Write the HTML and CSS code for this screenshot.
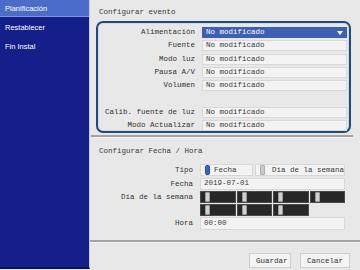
FILE: index.html
```html
<!DOCTYPE html>
<html lang="es">
<head>
  <meta charset="UTF-8">
  <title>Planificación</title>
  <link rel="stylesheet" href="styles.css">
</head>
<body>
  <div class="app">
    <nav class="sidebar">
      <div class="nav-item active">Planificación</div>
      <div class="nav-item">Restablecer</div>
      <div class="nav-item">Fin Instal</div>
    </nav>

    <main class="main">
      <div class="section-title">Configurar evento</div>
      <div class="event-box">
        <div class="label">Alimentación</div>
        <div class="value selected">No modificado<span class="arrow"></span></div>
        <div class="label">Fuente</div>
        <div class="value">No modificado</div>
        <div class="label">Modo luz</div>
        <div class="value">No modificado</div>
        <div class="label">Pausa A/V</div>
        <div class="value">No modificado</div>
        <div class="label">Volumen</div>
        <div class="value">No modificado</div>
        <div class="label"></div>
        <div class="blank"></div>
        <div class="label">Calib. fuente de luz</div>
        <div class="value">No modificado</div>
        <div class="label">Modo Actualizar</div>
        <div class="value">No modificado</div>
      </div>

      <div class="divider short"></div>

      <div class="section-title second">Configurar Fecha / Hora</div>
      <div class="date-form">
        <div class="label">Tipo</div>
        <div class="type-row">
          <div class="option fecha"><span class="mark on"></span>Fecha</div>
          <div class="option dia"><span class="mark"></span>Día de la semana</div>
        </div>
        <div class="label">Fecha</div>
        <div class="value">2019-07-01</div>
        <div class="label top">Día de la semana</div>
        <div class="days">
          <div class="day"><span class="mark"></span></div>
          <div class="day"><span class="mark"></span></div>
          <div class="day"><span class="mark"></span></div>
          <div class="day"><span class="mark"></span></div>
          <div class="day"><span class="mark"></span></div>
          <div class="day"><span class="mark"></span></div>
          <div class="day"><span class="mark"></span></div>
        </div>
        <div class="label">Hora</div>
        <div class="value">00:00</div>
      </div>

      <div class="divider full"></div>

      <div class="actions">
        <button class="btn save">Guardar</button>
        <button class="btn">Cancelar</button>
      </div>
    </main>
  </div>
</body>
</html>
```

FILE: styles.css
```css
body {
  margin: 0;
  width: 360px;
  height: 270px;
  overflow: hidden;
  background-color: #e6e6e6;
  font-family: 'Liberation Mono', monospace;
  font-size: 7.5px;
  color: #3a3a3a;
}
.app {
  display: flex;
  height: 270px;
}
.sidebar {
  width: 90px;
  flex-shrink: 0;
  background-color: #141f8a;
  border-right: 1px solid #c9cde4;
  border-bottom: 2px solid #0c1460;
  box-sizing: border-box;
  height: 269px;
  font-family: 'Liberation Sans', Arial, sans-serif;
  font-size: 7.5px;
  color: #ffffff;
}
.nav-item {
  height: 19px;
  line-height: 17px;
  padding-left: 5px;
}
.nav-item.active {
  background-color: #4b6cc8;
  height: 17px;
  margin-bottom: 2px;
  border-bottom: 1px solid #7f97da;
  box-sizing: border-box;
}
.main {
  flex: 1;
  display: flex;
  flex-direction: column;
  background-color: #e8e8e8;
}
.section-title {
  padding: 7px 0 0 9px;
  height: 10px;
  line-height: 10px;
}
.section-title.second {
  padding-top: 8px;
}
.event-box {
  margin: 4px 0 0 6px;
  width: 255px;
  box-sizing: border-box;
  border: 2px solid #1d4d7c;
  border-radius: 7px;
  box-shadow: inset 0 0 0 1px #d2d8df;
  padding: 4px 2px 0 0;
  display: grid;
  grid-template-columns: 97px 145px;
  grid-auto-rows: 11px;
  column-gap: 7px;
  row-gap: 2.35px;
}
.label {
  text-align: right;
  line-height: 11px;
  white-space: nowrap;
  color: #333333;
}
.label.top {
  line-height: 12px;
}
.value {
  background-color: #f3f3f3;
  border: 1px solid #d8d8d8;
  box-sizing: border-box;
  padding-left: 3px;
  line-height: 9px;
  display: flex;
  align-items: center;
  white-space: nowrap;
}
.value.selected {
  background-color: #3d5fb6;
  border-color: #3d5fb6;
  color: #ffffff;
  justify-content: space-between;
  padding-right: 3px;
}
.arrow {
  width: 0;
  height: 0;
  border-left: 3px solid transparent;
  border-right: 3px solid transparent;
  border-top: 4px solid #ffffff;
}
.divider {
  height: 2px;
  background-color: #a3a3a3;
  border-bottom: 1px solid #f4f4f4;
}
.divider.short {
  margin: 2px 7px 0 1px;
}
.divider.full {
  margin-top: 10px;
}
.date-form {
  margin: 8px 0 0 6px;
  width: 257px;
  display: grid;
  grid-template-columns: 97px 145px;
  grid-template-rows: 12px 12px 25px 13px;
  column-gap: 7px;
  row-gap: 1.3px;
}
.date-form .label {
  line-height: 12px;
}
.type-row {
  display: flex;
  gap: 2px;
}
.option {
  display: flex;
  align-items: center;
  gap: 4px;
  padding-left: 4px;
  background-color: #f3f3f3;
  border: 1px solid #d8d8d8;
  box-sizing: border-box;
  white-space: nowrap;
}
.option.fecha {
  width: 54px;
}
.option.dia {
  flex: 1;
  gap: 7px;
}
.mark {
  display: inline-block;
  width: 3px;
  height: 8px;
  border-radius: 1px;
  background-color: #c9c9c9;
  border: 1px solid #b0b0b0;
  flex-shrink: 0;
}
.mark.on {
  background-color: #3a64c8;
  border-color: #2c4fa6;
  border-radius: 2px;
}
.days {
  display: grid;
  grid-template-columns: repeat(4, 1fr);
  grid-auto-rows: 12px;
  gap: 1px;
}
.day {
  background-color: #272727;
  border: 1px solid #4a4a4a;
  box-sizing: border-box;
  display: flex;
  align-items: center;
  padding-left: 4px;
}
.day .mark {
  background-color: #d0d0d0;
  border-color: #9a9a9a;
}
.actions {
  display: flex;
  justify-content: flex-end;
  gap: 9px;
  padding: 10px 10px 0 0;
}
.btn {
  height: 15px;
  padding: 0 6px;
  background-color: #f4f4f4;
  border: 1px solid #cfcfcf;
  font-family: 'Liberation Mono', monospace;
  font-size: 7.5px;
  color: #333333;
}
.btn.save {
  width: 42px;
}
```
